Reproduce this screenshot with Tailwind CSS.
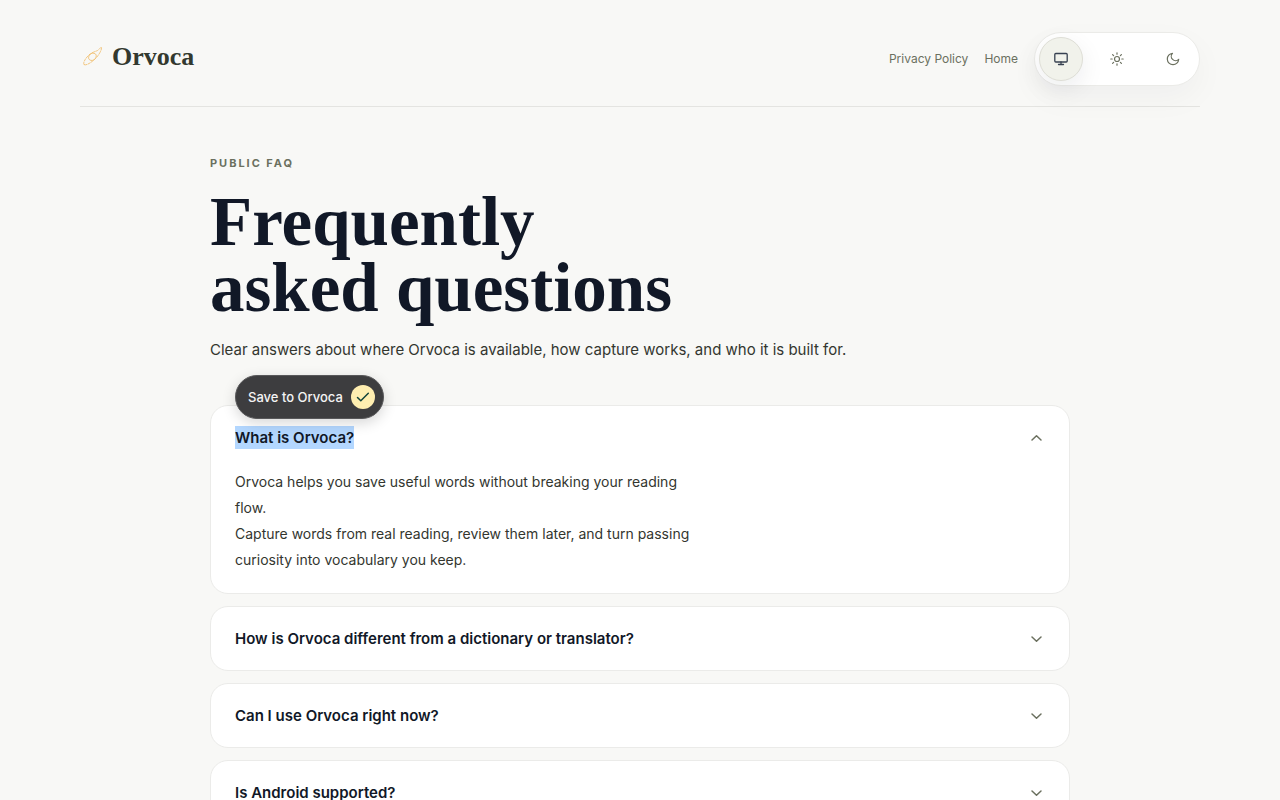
<!DOCTYPE html>
<html lang="en">
  <head>
    <meta charset="UTF-8" />
    <meta name="viewport" content="width=device-width, initial-scale=1.0" />
    <title>Orvoca FAQ</title>
    <script src="https://cdn.jsdelivr.net/npm/@tailwindcss/browser@4"></script>
  </head>
  <body
    class="min-h-screen overflow-x-hidden bg-[#f8f8f6] font-['Inter','Liberation_Sans',sans-serif] text-[#33362f]"
  >
    <div class="mx-auto max-w-[1280px] px-6 lg:px-20">
      <!-- Header -->
      <header
        class="flex items-center justify-between border-b border-[#e4e4e1] pt-8 pb-5"
      >
        <a href="#" class="flex items-center gap-2 pb-1">
          <svg
            class="size-6"
            viewBox="0 0 24 24"
            fill="none"
            stroke="#f0c070"
            stroke-width="0.9"
            stroke-linecap="round"
            stroke-linejoin="round"
          >
            <path d="M4 19.500C3 18.500 4.500 14.500 8 11C12 7 14.500 7 17.500 5.500C20 4 21 1.500 21.500 2.500C22 4 19.500 9.500 15.500 13.500C11 18 5.500 21 4 19.500Z" stroke-dasharray="2.500 1.300" />
            <path d="M9.500 9.800C10.500 8 14 7.500 15.500 9C17 10.500 16 13.500 14 14.800C12 16 9.500 15.500 8.800 13.800C8.300 12.500 8.800 11 9.500 9.800Z" />
          </svg>
          <span
            class="font-['Liberation_Serif',serif] text-[26px] leading-8 font-bold text-[#33392f]"
            >Orvoca</span
          >
        </a>

        <div class="flex items-center gap-4">
          <nav class="flex gap-4 pb-px text-xs leading-5 text-[#6b705f]">
            <a href="#">Privacy Policy</a>
            <a href="#">Home</a>
          </nav>

          <!-- Theme switch -->
          <div
            class="flex gap-3 rounded-full border border-[#ebebe8] bg-white p-1 text-[#6b705f] shadow-[0_12px_32px_rgba(17,24,39,0.04)]"
          >
            <button
              type="button"
              aria-label="System theme"
              class="flex size-11 items-center justify-center rounded-full border border-[#deded6] bg-[#f1f2eb] text-[#374151] shadow-[0_8px_24px_rgba(17,24,39,0.08)]"
            >
              <svg class="size-4" viewBox="0 0 16 16" fill="none" stroke="currentColor" stroke-width="1.300" stroke-linecap="round" stroke-linejoin="round">
                <rect x="1.800" y="2.500" width="12.400" height="8.500" rx="1" />
                <path d="M8 11v2.500M5.500 13.500h5" />
              </svg>
            </button>
            <button
              type="button"
              aria-label="Light theme"
              class="flex size-11 items-center justify-center rounded-full"
            >
              <svg class="size-4" viewBox="0 0 16 16" fill="none" stroke="currentColor" stroke-width="1.200" stroke-linecap="round">
                <circle cx="8" cy="8" r="2.500" />
                <path d="M8 1.800v1.400M8 12.800v1.400M1.800 8h1.400M12.800 8h1.400M3.600 3.600l1 1M11.400 11.400l1 1M3.600 12.400l1-1M11.400 4.600l1-1" />
              </svg>
            </button>
            <button
              type="button"
              aria-label="Dark theme"
              class="flex size-11 items-center justify-center rounded-full"
            >
              <svg class="size-4" viewBox="0 0 16 16" fill="none" stroke="currentColor" stroke-width="1.200" stroke-linecap="round" stroke-linejoin="round">
                <path d="M7.500 2.300A4.200 4.200 0 0 0 13.700 8.300A5.700 5.700 0 1 1 7.500 2.300Z" />
              </svg>
            </button>
          </div>
        </div>
      </header>

      <!-- FAQ -->
      <main class="mx-auto max-w-[860px] pt-12 pb-16">
        <p
          class="text-[11px] leading-4 font-bold tracking-[0.18em] text-[#6b705f] uppercase"
        >
          Public FAQ
        </p>
        <h1
          class="mt-[18px] font-['Liberation_Serif',serif] text-[69px] leading-[66px] font-bold text-[#111827]"
        >
          Frequently<br />asked questions
        </h1>
        <p class="mt-4 text-[15px] leading-[26px]">
          Clear answers about where Orvoca is available, how capture works, and
          who it is built for.
        </p>

        <div class="mt-[42px] flex flex-col gap-3">
          <details
            open
            class="relative rounded-[18px] border border-[#ebebe9] bg-white"
          >
            <summary
              class="flex cursor-pointer items-center justify-between px-6 py-5 text-[15px] leading-[23px] font-semibold text-[#111827]"
            >
              <span class="bg-[#b3d7ff]">What is Orvoca?</span>
              <svg class="size-4 rotate-180 text-[#6b705f]" viewBox="0 0 16 16" fill="none" stroke="currentColor" stroke-width="1.500" stroke-linecap="round" stroke-linejoin="round">
                <path d="M4 6L8.500 10.300L13 6" />
              </svg>
            </summary>
            <div class="px-6 pb-5 text-sm leading-[26px]">
              <div class="max-w-[464px]">
                <p>
                  Orvoca helps you save useful words without breaking your
                  reading flow.
                </p>
                <p>
                  Capture words from real reading, review them later, and turn
                  passing curiosity into vocabulary you keep.
                </p>
              </div>
            </div>

            <!-- Save bubble over the selected text -->
            <button
              type="button"
              class="absolute -top-[31px] left-6 flex items-center gap-2 rounded-full border border-[#58585a] bg-[#3d3d3f] py-[9px] pr-2 pl-3 text-[13px] leading-6 font-medium whitespace-nowrap text-[#f4f4f4] shadow-[0_4px_14px_rgba(0,0,0,0.16)]"
            >
              Save to Orvoca
              <span
                class="flex size-6 items-center justify-center rounded-full bg-[#feeeb0]"
              >
                <svg class="size-4" viewBox="0 0 16 16" fill="none" stroke="#12443a" stroke-width="1.500" stroke-linecap="round" stroke-linejoin="round">
                  <path d="M2.500 8.500L5.800 11.800L13.300 4.300" />
                </svg>
              </span>
            </button>
          </details>

          <details class="rounded-[18px] border border-[#ebebe9] bg-white">
            <summary
              class="flex cursor-pointer items-center justify-between px-6 py-5 text-[15px] leading-[23px] font-semibold text-[#111827]"
            >
              <span>How is Orvoca different from a dictionary or translator?</span>
              <svg class="size-4 text-[#6b705f]" viewBox="0 0 16 16" fill="none" stroke="currentColor" stroke-width="1.500" stroke-linecap="round" stroke-linejoin="round">
                <path d="M3 6L7.500 10.300L12 6" />
              </svg>
            </summary>
          </details>

          <details class="rounded-[18px] border border-[#ebebe9] bg-white">
            <summary
              class="flex cursor-pointer items-center justify-between px-6 py-5 text-[15px] leading-[23px] font-semibold text-[#111827]"
            >
              <span>Can I use Orvoca right now?</span>
              <svg class="size-4 text-[#6b705f]" viewBox="0 0 16 16" fill="none" stroke="currentColor" stroke-width="1.500" stroke-linecap="round" stroke-linejoin="round">
                <path d="M3 6L7.500 10.300L12 6" />
              </svg>
            </summary>
          </details>

          <details class="rounded-[18px] border border-[#ebebe9] bg-white">
            <summary
              class="flex cursor-pointer items-center justify-between px-6 py-5 text-[15px] leading-[23px] font-semibold text-[#111827]"
            >
              <span>Is Android supported?</span>
              <svg class="size-4 text-[#6b705f]" viewBox="0 0 16 16" fill="none" stroke="currentColor" stroke-width="1.500" stroke-linecap="round" stroke-linejoin="round">
                <path d="M3 6L7.500 10.300L12 6" />
              </svg>
            </summary>
          </details>
        </div>
      </main>
    </div>
  </body>
</html>
